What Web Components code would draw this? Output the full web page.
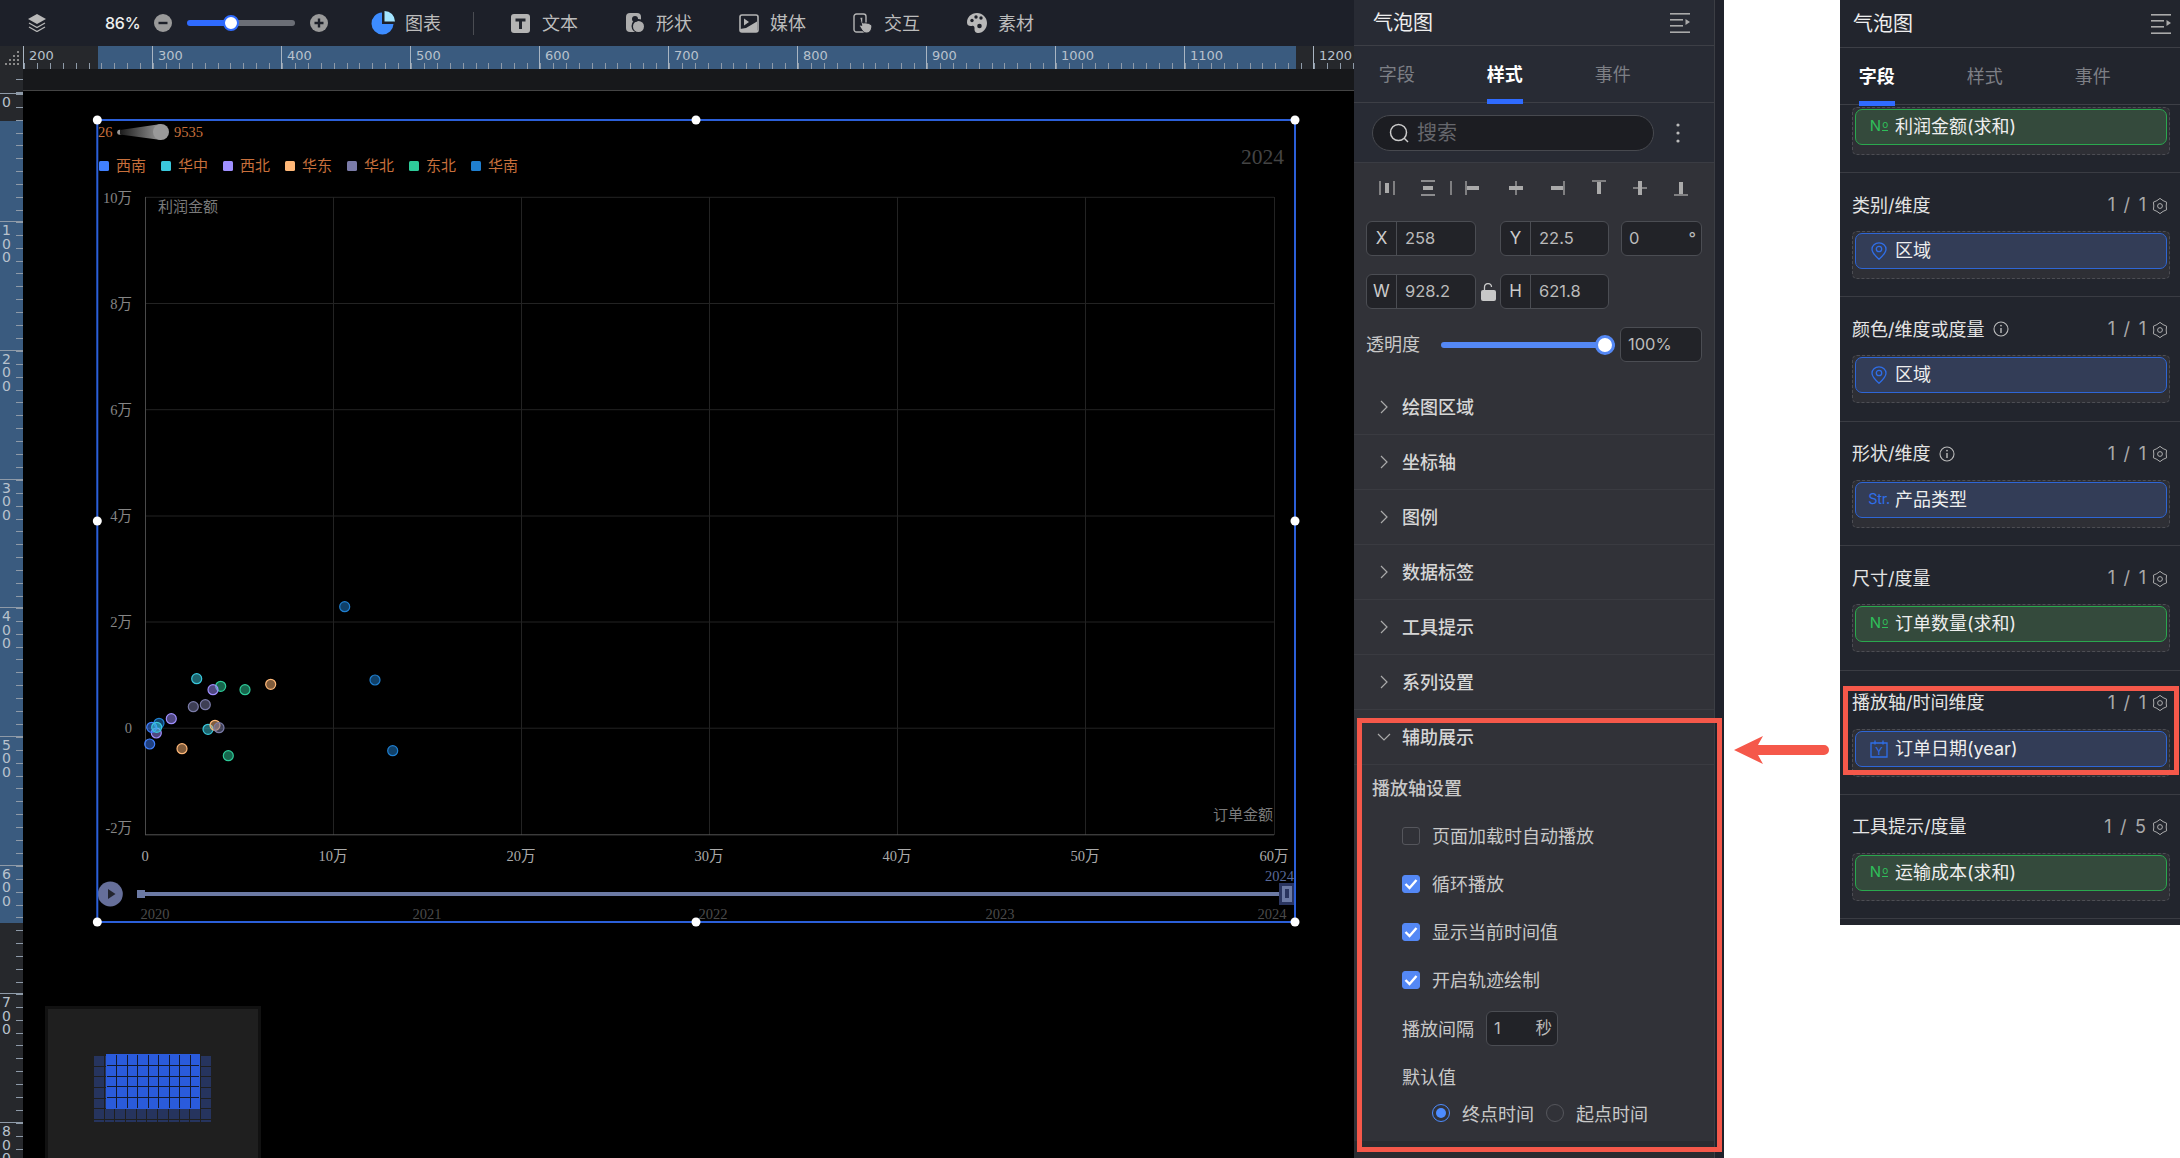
<!DOCTYPE html>
<html lang="zh">
<head>
<meta charset="utf-8">
<title>气泡图</title>
<style>
    html, body { margin: 0; background: #fff; }
    body { font-family: Inter, "Noto Sans CJK SC", sans-serif; }
</style>
</head>
<body>
<x-app>
    <x-editor></x-editor>
    <x-style-panel></x-style-panel>
    <x-field-panel></x-field-panel>
    <x-callout style="left:1357px;top:718px;width:365px;height:434px"></x-callout>
    <x-callout style="left:1843px;top:686px;width:336px;height:89px"></x-callout>
    <x-arrow></x-arrow>
</x-app>
<script>
(function() {
    // every element fills its shadow root once, when it is attached
    function component(name, render) {
        customElements.define(name, class extends HTMLElement {
            connectedCallback() {
                if (this.shadowRoot) return
                this.attachShadow({mode: "open"})
                this.shadowRoot.innerHTML = render(this)
            }
        })
    }

    const icons = {
        menu: `<svg width="20" height="20" viewBox="0 0 20 20" fill="#aaa"><rect width="20" height="1.6" y="0"/><rect width="13" height="1.6" y="6"/><rect width="13" height="1.6" y="12"/><rect width="20" height="1.6" y="18.4"/><path d="M15.5 6l4.5 3-4.5 3z"/></svg>`,
        pin: `<svg width="16" height="18" viewBox="0 0 16 18" fill="none" stroke="#2f6ee8" stroke-width="1.3"><path d="M8 .8C4 .8 1 3.6 1 7.2 1 11 8 17.2 8 17.2S15 11 15 7.2C15 3.6 12 .8 8 .8z"/><circle cx="8" cy="7" r="2.7"/></svg>`,
        date: `<svg width="18" height="18" viewBox="0 0 18 18" fill="none" stroke="#2f6ee8" stroke-width="1.3"><path d="M1 3h16v14H1zM5 .5v4M13 .5v4"/><text x="9" y="14.6" font-size="11" fill="#2f6ee8" stroke="none" text-anchor="middle" font-family="Inter">Y</text></svg>`,
        info: `<svg width="16" height="16" viewBox="0 0 16 16" fill="none" stroke="#bbb" stroke-width="1.1"><circle cx="8" cy="8" r="7"/><path d="M8 7v5" stroke-width="1.4"/><circle cx="8" cy="4.6" r=".9" fill="#bbb" stroke="none"/></svg>`,
        chevronRight: `<svg width="14" height="14" viewBox="0 0 14 14" fill="none" stroke="#aaa" stroke-width="1.2"><path d="M4 1l6 6-6 6"/></svg>`,
        chevronDown: `<svg width="14" height="12" viewBox="0 0 14 12" fill="none" stroke="#aaa" stroke-width="1.2"><path d="M1 3l6 6 6-6"/></svg>`
    }

    function gear() {
        const pts = []
        for (let i = 0; i < 12; i++) {
            const a = (i * 30 - 90) * Math.PI / 180
            const r = i % 2 ? 6.2 : 7.6
            pts.push((8 + r * Math.cos(a)).toFixed(2) + "," + (8 + r * Math.sin(a)).toFixed(2))
        }
        return `<svg width="16" height="16" viewBox="0 0 16 16" fill="none" stroke="#bbb" stroke-width=".9" stroke-linejoin="round"><polygon points="${pts.join(" ")}"/><circle cx="8" cy="8" r="2.4"/></svg>`
    }

    /* ---------- toolbar ---------- */
    component("x-tool", el => `
<style>
    :host { display: inline-flex; align-items: center; width: ${el.getAttribute("width") || 114}px; height: 46px; flex: none; }
    ::slotted(svg) { flex: none; }
    span { margin-left: ${el.getAttribute("gap") || 11}px; margin-top: -3px; font-size: 18px; color: #bcbcbc; white-space: nowrap; }
</style>
<slot></slot><span>${el.getAttribute("label")}</span>`)

    component("x-toolbar", () => `
<style>
    :host { display: flex; align-items: center; height: 46px; background: #1d2029; padding-left: 28px; flex: none; }
    .zoom { margin-left: 59px; margin-right: 15px; width: 34px; font-size: 16px; font-weight: 500; letter-spacing: -.2px; white-space: nowrap; color: #eee; }
    .track { margin: 0 15px; width: 108px; height: 6px; border-radius: 3px; background: linear-gradient(90deg, #2f6bff 44px, #6b6e76 44px); display: flex; align-items: center; }
    .thumb { margin-left: 36px; width: 12px; height: 12px; box-sizing: content-box; border: 2.5px solid #2f6bff; border-radius: 50%; background: #fff; flex: none; }
    .sep { width: 1px; height: 23px; background: #4a4c52; margin: 0 37px 0 33px; flex: none; }
    .chart { margin-left: 43px; }
    .gap { display: flex; }
</style>
<svg width="18" height="18" viewBox="0 0 18 18" fill="#b8b8b8"><path d="M9 0l9 5-9 5-9-5z"/><path d="M1 9l8 4.5L17 9M1 13l8 4.5 8-4.5" fill="none" stroke="#b8b8b8" stroke-width="1.3"/></svg>
<div class="zoom">86%</div>
<svg width="18" height="18" viewBox="0 0 18 18"><circle cx="9" cy="9" r="9" fill="#9a9a9a"/><rect x="4.5" y="7.8" width="9" height="2.4" fill="#1d2029"/></svg>
<div class="track"><div class="thumb"></div></div>
<svg width="18" height="18" viewBox="0 0 18 18"><circle cx="9" cy="9" r="9" fill="#9a9a9a"/><path d="M4.5 7.8h3.3V4.5h2.4v3.3h3.3v2.4h-3.3v3.3H7.8v-3.3H4.5z" fill="#1d2029"/></svg>
<div class="chart gap"><x-tool label="图表" width="69" gap="10"><svg width="24" height="24" viewBox="0 0 24 24"><path d="M11 1.5A11 11 0 1 0 22.500 13H11z" fill="#3d8cff"/><path d="M13.500 0A10.500 10.500 0 0 1 24 10.500H13.500z" fill="#a4e5ff"/></svg></x-tool></div>
<div class="sep"></div>
<x-tool label="文本"><svg width="20" height="19" viewBox="0 0 20 19"><rect width="19" height="19" rx="3" fill="#b4b4b4"/><path d="M4.500 4.500h10v3h-3.500v7.500H8V7.500H4.500z" fill="#23262e"/></svg></x-tool>
<x-tool label="形状"><svg width="20" height="20" viewBox="0 0 20 20"><rect x="1" y="0" width="15" height="19" rx="4" fill="#adadad"/><circle cx="13.500" cy="13" r="7" fill="#1d2029"/><circle cx="13.500" cy="13.500" r="5.500" fill="#adadad"/><circle cx="10" cy="6" r="3" fill="#1d2029"/></svg></x-tool>
<x-tool label="媒体"><svg width="20" height="19" viewBox="0 0 20 19"><rect x="1" y="1" width="18" height="17" rx="2" fill="none" stroke="#b4b4b4" stroke-width="1.6"/><path d="M5 4.500l5 3.500-5 3.500zM1 18v-3l6-1 11-6.500V18z" fill="#b4b4b4"/></svg></x-tool>
<x-tool label="交互"><svg width="20" height="20" viewBox="0 0 20 20"><rect x="1" y="1" width="12" height="18" rx="2.500" fill="none" stroke="#b4b4b4" stroke-width="1.4"/><path d="M7 5.500c0-1.600 2.800-1.600 2.800 0V10c3-.6 9 .6 9 3.500 0 3.500-2 6.500-5 6.500-3.500 0-5-3-7-6.500-.6-1.300 1-2 2-1z" fill="#b4b4b4" stroke="#1d2029" stroke-width="1"/></svg></x-tool>
<x-tool label="素材"><svg width="20" height="20" viewBox="0 0 20 20"><path d="M10 0C4 0 0 4.300 0 9.500c0 3.500 3 3.800 4.800 3.400 2.200-.5 3 1 2.700 3-.3 2.200 1.500 4.100 4 4.100 4.500 0 8.500-4.500 8.500-10S15.500 0 10 0z" fill="#b8b8b8"/><circle cx="5" cy="7.500" r="1.700" fill="#1d2029"/><circle cx="9" cy="4" r="1.700" fill="#1d2029"/><circle cx="14" cy="5" r="1.700" fill="#1d2029"/><circle cx="12.500" cy="13" r="2.300" fill="#1d2029"/></svg></x-tool>`)

    /* ---------- rulers ---------- */
    component("x-ruler-top", () => {
        let cells = ""
        for (let v = 200; v <= 1200; v += 100) cells += `<div class="cell">${v}</div>`
        return `
<style>
    :host { display: flex; height: 23px; flex: 1; overflow: hidden; background: linear-gradient(90deg, #26282c 75px, #3a5b7f 75px, #3a5b7f 1273px, #26282c 1273px); }
    .cell { flex: none; box-sizing: border-box; width: 129px; height: 23px; border-left: 1px solid #a9b5c2; padding-left: 5px;
        font: 13px/19px "DejaVu Sans", sans-serif; color: #b8c2cd;
        background: repeating-linear-gradient(90deg, #8e9aa8 0 1px, transparent 1px 12.9px) left bottom / 100% 6px no-repeat; }
</style>
${cells}`
    })

    component("x-ruler-left", () => {
        let cells = ""
        for (let v = 0; v <= 800; v += 100) cells += `<div class="cell"><div class="num">${v}</div></div>`
        return `
<style>
    :host { display: block; width: 23px; flex: none; overflow: hidden; background: linear-gradient(180deg, #26282c 52px, #3a5b7f 52px, #3a5b7f 854px, #26282c 854px); }
    .top { height: 23.5px; background: repeating-linear-gradient(180deg, #8e9aa8 0 1px, transparent 1px 12.87px) right 10px / 7px 100% no-repeat; }
    .cell { box-sizing: border-box; height: 128.7px; border-top: 1px solid #8e9aa8;
        background: repeating-linear-gradient(180deg, #8e9aa8 0 1px, transparent 1px 12.87px) right top / 7px 100% no-repeat; }
    .num { width: 12px; margin-left: 2px; padding-top: 2px; font: 14px/13.5px "DejaVu Sans", sans-serif; color: #b8c2cd; word-break: break-all; }
</style>
<div class="top"></div>${cells}`
    })

    /* ---------- chart on the canvas ---------- */
    const palette = {
        southwest: "#4080ff", central: "#3ac8dc", northwest: "#9f8fff", east: "#ffb878",
        north: "#7a7ba8", northeast: "#2ecc9a", south: "#1f7fd0"
    }
    const legend = [["西南", "southwest"], ["华中", "central"], ["西北", "northwest"], ["华东", "east"], ["华北", "north"], ["东北", "northeast"], ["华南", "south"]]
    // reference coordinates, measured from the picture
    const points = [
        [344.7, 606.7, "south"], [375, 680, "south"], [392.7, 750.7, "south"], [159, 723.3, "south"],
        [196.7, 678.7, "central"], [208, 729.3, "central"],
        [220.7, 686.3, "northeast"], [245, 689.7, "northeast"], [228.3, 755.7, "northeast"],
        [270.7, 684.3, "east"], [215, 725.3, "east"], [182, 748.7, "east"],
        [213, 689.7, "northwest"], [171.3, 718.7, "northwest"], [156.3, 733, "northwest"],
        [193.3, 706.7, "north"], [205.3, 704.7, "north"], [219, 727.7, "north"],
        [151.7, 727.3, "southwest"], [149.7, 744, "southwest"], [156.7, 727.3, "central"]
    ]

    component("x-chart", () => {
        const xs = [145, 333, 521, 709, 897, 1085, 1274]
        const ys = [197.3, 303.5, 409.7, 516, 622, 728.2, 834.4]
        const labelYs = [198, 303.5, 409.7, 516, 622, 728.2, 827.5]
        const yLabels = ["10万", "8万", "6万", "4万", "2万", "0", "-2万"]
        const xLabels = ["0", "10万", "20万", "30万", "40万", "50万", "60万"]
        const times = [[155, "2020"], [427, "2021"], [713, "2022"], [1000, "2023"], [1272, "2024"]]
        const handles = [[97.3, 120], [696, 120], [1295, 120], [97.3, 521], [1295, 521], [97.3, 922], [696, 922], [1295, 922]]
        let grid = "", labels = "", marks = "", legendMarks = ""
        xs.forEach((x, i) => {
            if (i) grid += `<path d="M${x}.5 197V835" stroke="#232323"/>`
            labels += `<text x="${x}" y="861" text-anchor="middle" fill="#aaa">${xLabels[i]}</text>`
        })
        ys.forEach((y, i) => {
            if (i < 6) grid += `<path d="M145 ${y}H1274" stroke="#232323"/>`
            labels += `<text x="132" y="${labelYs[i] + 5}" text-anchor="end" fill="#858585">${yLabels[i]}</text>`
        })
        points.forEach(p => {
            marks += `<circle cx="${p[0]}" cy="${p[1]}" r="5" fill="${palette[p[2]]}" fill-opacity=".5" stroke="${palette[p[2]]}" stroke-width="1.2"/>`
        })
        legend.forEach((l, i) => {
            const x = 99 + i * 62
            legendMarks += `<rect x="${x}" y="161" width="10" height="10" rx="1.500" fill="${palette[l[1]]}"/><text x="${x + 17}" y="170.500" font-size="15" fill="#c8703c">${l[0]}</text>`
        })
        return `
<style>
    :host { position: absolute; left: 74.3px; top: 29px; width: 1198px; height: 802px; }
    svg { display: block; overflow: visible; font: 14.5px "Liberation Serif", "Noto Sans CJK SC", serif; }
</style>
<svg width="1198" height="802" viewBox="97 120 1198 802">
    <defs><linearGradient id="cone"><stop offset="0" stop-color="#1c1c1c"/><stop offset="1" stop-color="#999"/></linearGradient></defs>
    <text x="98" y="136.500" fill="#c8703c">26</text>
    <circle cx="119.700" cy="132.300" r="2.500" fill="#999"/>
    <polygon points="120,130 161,124 161,140 120,134.500" fill="url(#cone)"/>
    <circle cx="161" cy="132" r="8" fill="#999"/>
    <text x="174" y="136.500" fill="#c8703c">9535</text>
    ${legendMarks}
    <text x="1241" y="164" font-size="21.500" fill="#444">2024</text>
    ${grid}
    <path d="M145.500 197V835" stroke="#4a4a4a"/>
    <path d="M145 834.800H1274" stroke="#555"/>
    ${labels}
    <text x="158" y="212" font-size="15" fill="#7a7a7a">利润金额</text>
    <text x="1213" y="820" font-size="15" fill="#7a7a7a">订单金额</text>
    ${marks}
    <circle cx="110.300" cy="894" r="12.500" fill="#666f9a"/>
    <path d="M108 889l7.500 5-7.500 5z" fill="#23252f"/>
    <rect x="137" y="892" width="1143" height="4" fill="#6c7aa5"/>
    <rect x="137" y="890" width="8" height="8" fill="#6c7aa5"/>
    <rect x="1279" y="883" width="15" height="22" fill="#2a3560"/>
    <rect x="1282" y="886" width="10" height="16" fill="#6c7aa5"/>
    <rect x="1285" y="889" width="4" height="9" fill="#2a3560"/>
    <text x="1294" y="881" text-anchor="end" fill="#5a6a9a">2024</text>
    ${times.map(t => `<text x="${t[0]}" y="919" text-anchor="middle" fill="#4a4a4a">${t[1]}</text>`).join("")}
    <rect x="97.300" y="120" width="1197.700" height="802" fill="none" stroke="#2b5fd9" stroke-width="2"/>
    ${handles.map(h => `<circle cx="${h[0]}" cy="${h[1]}" r="4.500" fill="#fff"/>`).join("")}
</svg>`
    })

    component("x-minimap", () => `
<style>
    :host { position: absolute; left: 22px; top: 915px; width: 210px; height: 200px; background: #1f1f1f; border: 3px solid #111; }
    .all { position: absolute; left: 46px; top: 47px; width: 118px; height: 66px;
        background: repeating-linear-gradient(90deg, transparent 0 9.7px, #1f1f1f 9.7px 10.7px), repeating-linear-gradient(180deg, #26345e 0 9.7px, #1f1f1f 9.7px 10.7px); }
    .view { position: absolute; left: 58px; top: 45px; width: 92px; height: 53px; border: 1px solid #2a5bdc;
        background: repeating-linear-gradient(90deg, transparent 0 9.4px, #141a2c 9.4px 10.500px), repeating-linear-gradient(180deg, #2a5bdc 0 9.800px, #141a2c 9.800px 10.800px); }
</style>
<div class="all"></div><div class="view"></div>`)

    component("x-editor", () => `
<style>
    :host { display: flex; flex-direction: column; width: 1354px; height: 1158px; flex: none; background: #000; overflow: hidden; }
    .head { display: flex; flex: none; }
    .corner { width: 23px; height: 23px; flex: none; background: #26282c; }
    .body { display: flex; flex: 1; min-height: 0; }
    .work { flex: 1; display: flex; flex-direction: column; min-width: 0; }
    .strip { height: 21px; flex: none; background: #17181b; border-bottom: 1px solid #444; }
    .canvas { position: relative; flex: 1; background: #000; }
</style>
<x-toolbar></x-toolbar>
<div class="head">
    <div class="corner"><svg width="23" height="23" viewBox="0 0 23 23" fill="#8a8a8a"><path d="M17 5h2v2h-2zM17 9h2v2h-2zM13 9h2v2h-2zM17 13h2v2h-2zM13 13h2v2h-2zM9 13h2v2H9zM17 17h2v2h-2zM13 17h2v2h-2zM9 17h2v2H9zM5 17h2v2H5z"/></svg></div>
    <x-ruler-top></x-ruler-top>
</div>
<div class="body">
    <x-ruler-left></x-ruler-left>
    <div class="work">
        <div class="strip"></div>
        <div class="canvas">
            <x-chart></x-chart>
            <x-minimap></x-minimap>
        </div>
    </div>
</div>`)

    /* ---------- shared panel parts ---------- */
    component("x-panel-title", el => `
<style>
    :host { display: flex; align-items: center; justify-content: space-between; flex: none; box-sizing: border-box;
        height: ${el.getAttribute("height")}px; padding: 0 ${el.getAttribute("end")}px 0 ${el.getAttribute("start")}px; border-bottom: 1px solid #3d3f46; }
    span { font-size: 20px; color: #eee; margin-top: -3px; }
    svg { display: block; }
</style>
<span><slot></slot></span>${icons.menu}`)

    component("x-tabs", el => {
        const active = el.getAttribute("active")
        return `
<style>
    :host { display: flex; flex: none; box-sizing: border-box; height: 57px; padding-left: ${el.getAttribute("start")}px; gap: 72px; border-bottom: 1px solid #3d3f46; }
    div { position: relative; width: 36px; line-height: 58px; height: 57px; font-size: 18px; color: #7d7f85; white-space: nowrap; }
    .on { color: #fff; font-weight: 700; }
    .on::after { content: ""; position: absolute; left: 0; right: 0; bottom: -1px; height: 5px; background: #2f6bff; }
</style>
${["字段", "样式", "事件"].map(t => `<div class="${t === active ? "on" : ""}">${t}</div>`).join("")}`
    })

    /* ---------- style panel ---------- */
    component("x-num-input", el => {
        const label = el.getAttribute("label")
        const suffix = el.getAttribute("suffix")
        return `
<style>
    :host { display: flex; box-sizing: border-box; height: 35px; width: ${el.getAttribute("width")}px; flex: none; border: 1px solid #4b4d53; border-radius: 6px; background: #222328; font-size: 16.5px; color: #bbb; line-height: 33px; }
    .label { width: 29px; flex: none; text-align: center; border-right: 1px solid #4b4d53; color: #ccc; font-size: 17px; }
    .value { flex: 1; padding-left: ${label ? 8 : 7}px; }
    .suffix { padding-right: ${el.getAttribute("suffix-pad") || 5}px; }
</style>
${label ? `<div class="label">${label}</div>` : ""}<div class="value">${el.getAttribute("value")}</div>${suffix ? `<div class="suffix">${suffix}</div>` : ""}`
    })

    component("x-collapse", el => `
<style>
    :host { display: flex; align-items: center; box-sizing: border-box; height: 55px; padding-left: 23px; border-bottom: 1px solid #3a3b41; flex: none; }
    .arrow { width: 25px; display: flex; flex: none; }
    span { font-size: 18px; font-weight: 500; color: #d6d6d6; margin-top: -3px; }
</style>
<div class="arrow">${el.hasAttribute("open") ? icons.chevronDown : icons.chevronRight}</div><span><slot></slot></span>`)

    component("x-check", el => `
<style>
    :host { display: flex; align-items: center; height: 48px; padding-left: 48px; font-size: 18px; color: #c8c8c8; }
    .box { width: 18px; height: 18px; box-sizing: border-box; border-radius: 3px; border: 1px solid #55565c; margin-right: 12px; flex: none; }
    .on { background: #5488f5; border-color: #5488f5; }
    svg { display: block; }
    span { margin-top: -2px; }
</style>
<div class="box ${el.hasAttribute("checked") ? "on" : ""}">${el.hasAttribute("checked") ? `<svg width="16" height="16" viewBox="0 0 16 16" fill="none" stroke="#fff" stroke-width="2.400"><path d="M2.500 8l4 4 7-8"/></svg>` : ""}</div><span><slot></slot></span>`)

    component("x-radio", el => `
<style>
    :host { display: inline-flex; align-items: center; font-size: 18px; color: #c8c8c8; }
    .dot { width: 18px; height: 18px; box-sizing: border-box; border-radius: 50%; border: 1px solid ${el.hasAttribute("checked") ? "#4d8cff" : "#55565c"}; margin-right: 12px; display: flex; align-items: center; justify-content: center; }
    .dot i { width: 10px; height: 10px; border-radius: 50%; background: #4d8cff; }
</style>
<div class="dot">${el.hasAttribute("checked") ? "<i></i>" : ""}</div><slot></slot>`)

    const alignGlyphs = [
        ["M1 1v14M15 1v14", "M6 3h4v10H6z", 0],
        ["M1 1h14M1 15h14", "M3 6h10v4H3z", 25],
        ["M8 1v14", "", 7],
        ["M1 1v14", "M2 6h12v4H2z", 6],
        ["M8 1v14", "M1 6h14v4H1z", 27],
        ["M15 1v14", "M2 6h12v4H2z", 25],
        ["M1 1h14", "M6 2h4v12H6z", 26],
        ["M1 8h14", "M6 1h4v14H6z", 25],
        ["M1 15h14", "M6 2h4v12H6z", 25]
    ]

    component("x-style-panel", () => `
<style>
    :host { display: flex; width: 370px; height: 1158px; flex: none; background: #20222b; }
    .inner { width: 360px; display: flex; flex-direction: column; border-right: 1px solid #3c3e44; background: #282b34; }
    .search { height: 60px; flex: none; box-sizing: border-box; display: flex; align-items: center; padding-left: 18px; border-bottom: 1px solid #3a3c43; }
    .box { width: 282px; height: 36px; box-sizing: border-box; border: 1px solid #47494f; border-radius: 18px; background: #1c1d22; display: flex; align-items: center; padding-left: 16px; gap: 8px; font-size: 20px; color: #66676c; }
    .box span { margin-top: -3px; }
    .kebab { margin-left: 22px; }
    .lower { flex: 1; background: #313238; display: flex; flex-direction: column; }
    .aligns { display: flex; align-items: center; height: 50px; padding-left: 25px; flex: none; }
    .row { display: flex; align-items: center; height: 35px; margin-left: 12px; flex: none; margin-bottom: 18px; }
    .row.first { margin-top: 8px; }
    .lock { width: 24px; display: flex; justify-content: center; flex: none; }
    .slider { margin-left: 21px; width: 174px; height: 6px; background: #5488f5; border-radius: 3px; display: flex; align-items: center; justify-content: flex-end; margin-right: 5px; flex: none; }
    .slider i { width: 14px; height: 14px; border: 3px solid #5488f5; border-radius: 50%; background: #fff; flex: none; }
    .opacity { font-size: 18px; color: #c8c8c8; width: 54px; flex: none; margin-top: -3px; }
    .sections { margin-top: 0; display: flex; flex-direction: column; }
    .aux { height: 376px; flex: none; }
    .aux h4 { margin: 0; box-sizing: border-box; height: 47px; padding: 2px 0 0 18px; line-height: 44px; font-size: 18px; font-weight: 500; color: #c8c8c8; }
    .line { display: flex; align-items: center; padding-left: 48px; height: 48px; font-size: 18px; color: #c8c8c8; }
    .line x-num-input { margin-left: 12px; }
    .dflt { height: 50px; padding-bottom: 2px; box-sizing: border-box; }
    .radios { display: flex; align-items: center; height: 22px; padding-left: 78px; gap: 12px; }
    .tail { flex: 1; background: #2a2b30; }
</style>
<div class="inner">
    <x-panel-title height="46" start="19" end="24">气泡图</x-panel-title>
    <x-tabs active="样式" start="24.7"></x-tabs>
    <div class="search">
        <div class="box"><svg width="20" height="20" viewBox="0 0 20 20" fill="none" stroke="#ccc" stroke-width="1.500"><circle cx="9.500" cy="9.500" r="8"/><path d="M15 15l4 4"/></svg><span>搜索</span></div>
        <svg class="kebab" width="4" height="20" viewBox="0 0 4 20" fill="#bbb"><circle cx="2" cy="2" r="1.600"/><circle cx="2" cy="10" r="1.600"/><circle cx="2" cy="18" r="1.600"/></svg>
    </div>
    <div class="lower">
        <div class="aligns">${alignGlyphs.map(g => `<svg style="margin-left:${g[2]}px" width="16" height="16" viewBox="0 0 16 16"><path d="${g[0]}" stroke="#aaa" stroke-width="1.300" fill="none"/><path d="${g[1]}" fill="#aaa"/></svg>`).join("")}</div>
        <div class="row first">
            <x-num-input label="X" value="258" width="110"></x-num-input>
            <div class="lock"></div>
            <x-num-input label="Y" value="22.5" width="109"></x-num-input>
            <div style="width:12px"></div>
            <x-num-input value="0" suffix="°" width="81"></x-num-input>
        </div>
        <div class="row">
            <x-num-input label="W" value="928.2" width="110"></x-num-input>
            <div class="lock"><svg width="15" height="18" viewBox="0 0 15 18" fill="#c8c8c8"><rect y="7" width="15" height="11" rx="2"/><path d="M3.500 7V4a3.500 3.500 0 0 1 7 0" fill="none" stroke="#c8c8c8" stroke-width="1.300"/></svg></div>
            <x-num-input label="H" value="621.8" width="109"></x-num-input>
        </div>
        <div class="row">
            <div class="opacity">透明度</div>
            <div class="slider"><i></i></div>
            <x-num-input value="100%" width="82"></x-num-input>
        </div>
        <div class="sections">
            <x-collapse>绘图区域</x-collapse>
            <x-collapse>坐标轴</x-collapse>
            <x-collapse>图例</x-collapse>
            <x-collapse>数据标签</x-collapse>
            <x-collapse>工具提示</x-collapse>
            <x-collapse>系列设置</x-collapse>
            <x-collapse open>辅助展示</x-collapse>
        </div>
        <div class="aux">
            <h4>播放轴设置</h4>
            <x-check>页面加载时自动播放</x-check>
            <x-check checked>循环播放</x-check>
            <x-check checked>显示当前时间值</x-check>
            <x-check checked>开启轨迹绘制</x-check>
            <div class="line">播放间隔<x-num-input value="1" suffix="秒" suffix-pad="5" width="72"></x-num-input></div>
            <div class="line dflt">默认值</div>
            <div class="radios"><x-radio checked>终点时间</x-radio><x-radio>起点时间</x-radio></div>
        </div>
        <div class="tail"></div>
    </div>
</div>`)

    /* ---------- field panel ---------- */
    component("x-field-chip", el => {
        const kind = el.getAttribute("kind")
        const glyph = {
            no: `<span class="no">N<span class="o">o</span></span>`,
            str: `<span class="str">Str.</span>`,
            pin: icons.pin,
            date: icons.date
        }[el.getAttribute("icon")]
        return `
<style>
    :host { display: flex; box-sizing: border-box; height: 36px; margin: 1px 2px 0 2px; align-items: center; border-radius: 7px; padding-left: 13px; font-size: 18px; color: #eee;
        border: 1px solid ${kind === "measure" ? "#2aa84e" : "#2e66d6"}; background: ${kind === "measure" ? "#344a3c" : "#333d57"}; white-space: nowrap; }
    .icon { width: 20px; display: flex; justify-content: center; flex: none; margin-right: 6px; }
    .no { color: #2fbf5a; font-size: 15px; display: flex; align-items: flex-start; line-height: 18px; margin-top: -2px; }
    .o { font-size: 10px; line-height: 10px; margin: 2px 0 0 1px; border-bottom: 1px solid #2fbf5a; height: 11px; }
    .str { color: #2f6ee8; font-size: 14.5px; letter-spacing: -.3px; margin-top: -2px; }
    .text { margin-top: -4px; }
</style>
<div class="icon">${glyph}</div><span class="text"><slot></slot></span>`
    })

    component("x-field-section", el => `
<style>
    :host { display: block; box-sizing: border-box; height: 124.4px; padding: 20px 10px 0 12px; border-bottom: 1px solid #3a3c43; flex: none; }
    .head { display: flex; align-items: center; height: 26px; font-size: 18px; color: #e4e4e4; }
    .title { margin-top: -5px; }
    .info { display: flex; margin-left: 8px; margin-top: -2px; }
    .count { margin-left: auto; font-size: 18px; color: #aaa; word-spacing: 3.5px; margin-top: -3px; }
    .gear { display: flex; margin: -1px 2px 0 6px; }
    .drop { margin-top: 12px; height: 48px; box-sizing: border-box; border: 1px dashed #4c4d53; border-radius: 5px; background: #2e2f35; }
</style>
<div class="head"><span class="title">${el.getAttribute("heading")}</span>${el.hasAttribute("info") ? `<span class="info">${icons.info}</span>` : ""}<span class="count">${el.getAttribute("count")}</span><span class="gear">${gear()}</span></div>
<div class="drop"><slot></slot></div>`)

    component("x-field-panel", () => `
<style>
    :host { display: flex; flex-direction: column; width: 340px; height: 925px; margin-left: 116px; flex: none; background: #22252d; overflow: hidden; }
    .clip { height: 68px; flex: none; box-sizing: border-box; padding: 2px 10px 0 12px; border-bottom: 1px solid #3a3c43; }
    .drop { height: 48px; box-sizing: border-box; border: 1px dashed #4c4d53; border-radius: 5px; background: #2e2f35; }
</style>
<x-panel-title height="48" start="13" end="9">气泡图</x-panel-title>
<x-tabs active="字段" start="18.7"></x-tabs>
<div class="clip"><div class="drop"><x-field-chip kind="measure" icon="no">利润金额(求和)</x-field-chip></div></div>
<x-field-section heading="类别/维度" count="1 / 1"><x-field-chip kind="dimension" icon="pin">区域</x-field-chip></x-field-section>
<x-field-section heading="颜色/维度或度量" info count="1 / 1"><x-field-chip kind="dimension" icon="pin">区域</x-field-chip></x-field-section>
<x-field-section heading="形状/维度" info count="1 / 1"><x-field-chip kind="dimension" icon="str">产品类型</x-field-chip></x-field-section>
<x-field-section heading="尺寸/度量" count="1 / 1"><x-field-chip kind="measure" icon="no">订单数量(求和)</x-field-chip></x-field-section>
<x-field-section heading="播放轴/时间维度" count="1 / 1"><x-field-chip kind="dimension" icon="date">订单日期(year)</x-field-chip></x-field-section>
<x-field-section heading="工具提示/度量" count="1 / 5"><x-field-chip kind="measure" icon="no">运输成本(求和)</x-field-chip></x-field-section>`)

    /* ---------- annotations laid over the screenshot ---------- */
    component("x-callout", () => `
<style>
    :host { position: absolute; box-sizing: border-box; border: 5px solid #f5584a; }
</style>`)

    component("x-arrow", () => `
<style>
    :host { position: absolute; left: 1734px; top: 735px; width: 95px; height: 30px; }
    svg { display: block; }
</style>
<svg width="95" height="30" viewBox="0 0 95 30" fill="#f5584a"><path d="M0 15L29 1 24 10H90a5 5 0 0 1 0 10H24l5 9z"/></svg>`)

    component("x-app", () => `
<style>
    :host { display: flex; position: relative; width: 2180px; height: 1158px; overflow: hidden; background: #fff; }
</style>
<slot></slot>`)
})()
</script>
</body>
</html>
